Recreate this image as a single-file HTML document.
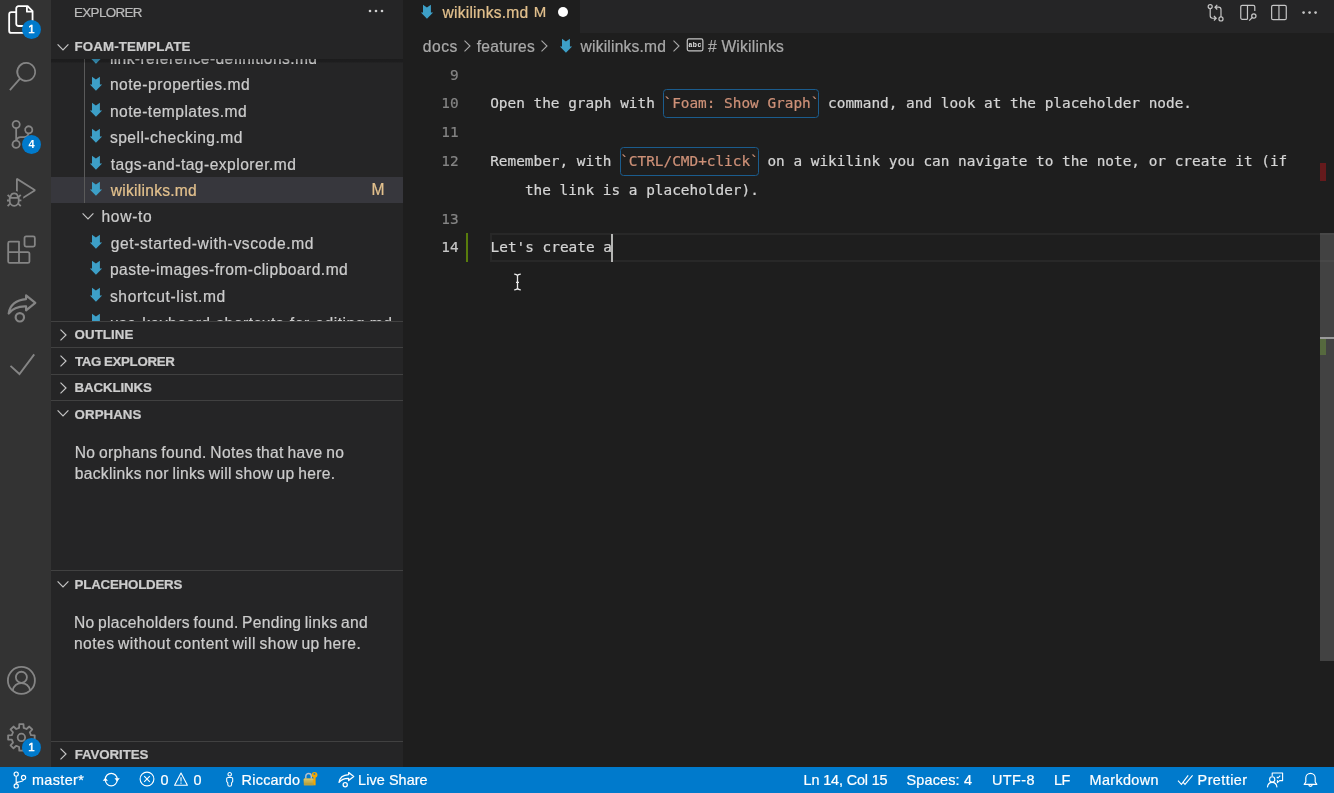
<!DOCTYPE html>
<html lang="en">
<head>
<meta charset="utf-8">
<title>wikilinks.md - foam-template</title>
<style>
*{box-sizing:border-box;margin:0;padding:0}
html,body{width:1334px;height:793px;overflow:hidden;background:#1e1e1e}
body{position:relative;font-family:"Liberation Sans",sans-serif;font-size:15.6px;color:#cccccc;-webkit-font-smoothing:antialiased}
.abs{position:absolute}
.ft{position:absolute;white-space:pre;-webkit-text-stroke:.22px}
svg{display:block;overflow:visible}
/* activity bar */
#act{will-change:transform;position:absolute;left:0;top:0;width:51px;height:767px;background:#333333}
#act svg{position:absolute}
.badge{position:absolute;width:19.2px;height:19.2px;border-radius:50%;background:#007acc;color:#fff;font-size:11px;font-weight:bold;text-align:center;line-height:19.2px}
.b1{font-weight:normal;-webkit-text-stroke:.55px #fff;font-size:11.5px}
/* sidebar */
#side{position:absolute;left:51px;top:0;width:352px;height:767px;background:#252526;overflow:hidden;will-change:transform}
#side .title{position:absolute;left:24px;top:0;height:25px;line-height:25px;font-size:13.2px;color:#bbbbbb;white-space:nowrap}
.phead{position:absolute;left:0;width:352px;height:26.4px;line-height:26.4px;font-size:13.3px;font-weight:bold;color:#cccccc;border-top:1px solid #414141;white-space:nowrap}
.phead span{position:absolute;left:23.6px;top:0}
.phead svg.cr{position:absolute;left:3.8px;top:4.9px}
.phead svg.cd{position:absolute;left:3.6px;top:4.3px}
#tree{position:absolute;left:0;top:59.4px;width:352px;height:261.6px;overflow:hidden}
.row{position:absolute;left:0;width:352px;height:26.4px;line-height:26.4px;white-space:nowrap;color:#cccccc}
.row .lbl{position:absolute;left:59.6px;top:1px;letter-spacing:.45px}
.row svg.md{position:absolute;left:38px;top:4.5px}
.row.sel{background:#37373d;color:#e2c08d}
.row .m{position:absolute;right:19px;top:0;color:#e2c08d;font-size:14px}
.msg{color:#cccccc;font-size:15.6px;line-height:21.4px;word-spacing:-1.1px}
/* editor */
#tabs{will-change:transform;position:absolute;left:403px;top:0;width:931px;height:33px;background:#252526}
#tab{position:absolute;left:0;top:0;width:177px;height:33px;background:#1e1e1e;color:#e2c08d;line-height:25px;white-space:nowrap}
#crumbs{will-change:transform;position:absolute;left:403px;top:33px;width:931px;height:26.4px;line-height:26.4px;color:#a9a9a9;white-space:nowrap}
#crumbs span{position:absolute;top:0}
#ed{will-change:transform;position:absolute;left:402.7px;top:60.1px;width:931.3px;height:707.6px;font-family:"DejaVu Sans Mono","Liberation Mono",monospace;font-size:14.4px;color:#d4d4d4;-webkit-text-stroke:.22px}
.ln{position:absolute;left:0;width:55.7px;text-align:right;height:28.8px;line-height:28.8px;color:#858585;white-space:pre}
.ln.cur{color:#c6c6c6}
.cl{position:absolute;left:87.2px;height:28.8px;line-height:28.8px;white-space:pre}
.code{color:#ce9178}
.box{position:absolute;height:28.8px;border:1px solid #1b5c8d;border-radius:3.5px}
/* status */
#status{will-change:transform;position:absolute;left:0;top:767px;width:1334px;height:26px;background:#007acc;color:#ffffff;font-size:14.4px;line-height:26px;white-space:nowrap}
#status span{position:absolute;top:0}
#status svg{position:absolute}
</style>
</head>
<body>

<div id="act">
  <svg style="left:7.3px;top:4.9px" width="28.8" height="28.8" viewBox="0 0 24 24" fill="#fff"><g fill="none" stroke="#ffffff" stroke-width="1.5" stroke-linejoin="round"><path d="M17.2 0.95 H9.6 a1.9 1.9 0 0 0 -1.9 1.9 V15.6 a1.9 1.9 0 0 0 1.9 1.9 H19.4 a1.9 1.9 0 0 0 1.9 -1.9 V5.1 Z"/><path d="M16.6 1.2 V5.6 H21"/><path d="M7.7 6.0 H3.7 a1.9 1.9 0 0 0 -1.9 1.9 V21.4 a1.9 1.9 0 0 0 1.9 1.9 H13.6 a1.9 1.9 0 0 0 1.9 -1.9 V17.6"/></g></svg>
  <div class="badge b1" style="left:21.9px;top:19.9px">1</div>
  <svg style="left:8px;top:61.6px" width="28.8" height="28.8" viewBox="0 0 24 24" fill="#858585"><path d="M15.25 0a8.25 8.25 0 0 0-6.18 13.72L1 22.88l1.12 1.12 8.05-9.12A8.251 8.251 0 1 0 15.25.01V0zm0 15a6.75 6.75 0 1 1 0-13.5 6.75 6.75 0 0 1 0 13.5z"/></svg>
  <svg style="left:7.6px;top:120.1px" width="28.8" height="28.8" viewBox="0 0 24 24" fill="#858585"><path d="M21.007 8.222A3.738 3.738 0 0 0 15.045 5.2a3.737 3.737 0 0 0 1.156 6.583 2.988 2.988 0 0 1-2.668 1.67h-2.99a4.456 4.456 0 0 0-2.989 1.165V7.4a3.737 3.737 0 1 0-1.494 0v9.117a3.776 3.776 0 1 0 1.816.099 2.99 2.99 0 0 1 2.668-1.667h2.99a4.484 4.484 0 0 0 4.223-3.039 3.736 3.736 0 0 0 3.25-3.687zM4.565 3.738a2.242 2.242 0 1 1 4.484 0 2.242 2.242 0 0 1-4.484 0zm4.484 16.441a2.242 2.242 0 1 1-4.484 0 2.242 2.242 0 0 1 4.484 0zm8.221-9.715a2.242 2.242 0 1 1 0-4.485 2.242 2.242 0 0 1 0 4.485z"/></svg>
  <div class="badge" style="left:22px;top:134.6px">4</div>
  <svg style="left:7.3px;top:177.7px" width="28.8" height="28.8" viewBox="0 0 24 24" fill="#858585"><path d="M10.94 13.5l-1.32 1.32a3.73 3.73 0 0 0-7.24 0L1.06 13.5 0 14.56l1.72 1.72-.22.22V18H0v1.5h1.5v.08c.077.489.214.966.41 1.42L0 22.94 1.06 24l1.65-1.65A4.308 4.308 0 0 0 6 24a4.31 4.31 0 0 0 3.29-1.65L10.94 24 12 22.94 10.09 21c.198-.464.336-.951.41-1.45v-.1H12V18h-1.5v-1.5l-.22-.22L12 14.56l-1.06-1.06zM6 13.5a2.25 2.25 0 0 1 2.25 2.25h-4.5A2.25 2.25 0 0 1 6 13.5zm3 6a3.33 3.33 0 0 1-3 3 3.33 3.33 0 0 1-3-3v-2.25h6v2.25zm14.76-9.9v1.26L13.5 17.37V15.6l8.5-5.37L9 2v9.46a5.07 5.07 0 0 0-1.5-.72V.63L8.64 0l15.12 9.6z"/></svg>
  <svg style="left:7.3px;top:235.3px" width="28.8" height="28.8" viewBox="0 0 24 24" fill="#858585"><g fill="none" stroke="#858585" stroke-width="1.5" stroke-linejoin="round"><rect x="14.6" y="1.1" width="8.6" height="8.6" rx="1.3"/><path d="M10 5.6 H2.3 a1.3 1.3 0 0 0 -1.3 1.3 V22 a1.3 1.3 0 0 0 1.3 1.3 H17.4 a1.3 1.3 0 0 0 1.3 -1.3 V15.6 a1.3 1.3 0 0 0 -1.3 -1.3 H10 Z M10 14.3 V23.3 M1 14.3 H10"/></g></svg>
  <svg style="left:7.3px;top:292.9px" width="28.8" height="28.8" viewBox="0 0 24 24" fill="#858585"><g fill="none" stroke="#858585" stroke-width="1.8" stroke-linejoin="round"><path d="M1.4 17.1 C2.3 10.2 7.6 5.6 15.9 5.1 V2.0 L23.6 8.2 L15.9 14.5 V11.2 C10 11.0 5.1 12.3 1.4 17.1 Z"/><circle cx="10.7" cy="20.25" r="3.5"/></g></svg>
  <svg style="left:7.3px;top:350.5px" width="28.8" height="28.8" viewBox="0 0 24 24" fill="#858585"><path fill="none" stroke="#858585" stroke-width="1.55" d="M2.9 12.4 L10.4 19.2 L22.7 2.8"/></svg>
  <svg style="left:7.3px;top:666.2px" width="28.8" height="28.8" viewBox="0 0 24 24" fill="#858585"><g fill="none" stroke="#858585" stroke-width="1.5"><circle cx="12" cy="12" r="11.25"/><circle cx="12" cy="9.4" r="4.6"/><path d="M4.7 20.4 C5.6 16.6 8.4 14.3 12 14.3 C15.6 14.3 18.4 16.6 19.3 20.4"/></g></svg>
  <svg style="left:7.3px;top:723.4px" width="28.8" height="28.8" viewBox="0 0 24 24" fill="#858585"><g fill="none" stroke="#858585" stroke-width="1.5" stroke-linejoin="round"><path d="M23.06 10.25 L23.06 13.75 L19.97 13.91 L18.99 16.28 L21.06 18.58 L18.58 21.06 L16.28 18.99 L13.91 19.97 L13.75 23.06 L10.25 23.06 L10.09 19.97 L7.72 18.99 L5.42 21.06 L2.94 18.58 L5.01 16.28 L4.03 13.91 L0.94 13.75 L0.94 10.25 L4.03 10.09 L5.01 7.72 L2.94 5.42 L5.42 2.94 L7.72 5.01 L10.09 4.03 L10.25 0.94 L13.75 0.94 L13.91 4.03 L16.28 5.01 L18.58 2.94 L21.06 5.42 L18.99 7.72 L19.97 10.09 Z"/><circle cx="12" cy="12" r="3.1"/></g></svg>
  <div class="badge b1" style="left:21.9px;top:737.5px">1</div>
</div>

<div id="side">
  <span id="t_explorer" class="ft" style="left:23.10px;top:-0.5px;letter-spacing:-0.666px;font-size:13.4px;color:#bbbbbb;line-height:25px">EXPLORER</span>
  <svg class="abs" style="left:316.8px;top:3.4px" width="16" height="16" viewBox="0 0 16 16"><circle cx="2" cy="8" r="1.3" fill="#cfcfcf"/><circle cx="8" cy="8" r="1.3" fill="#cfcfcf"/><circle cx="14" cy="8" r="1.3" fill="#cfcfcf"/></svg>
  <div class="phead" style="top:33px;border-top:none"><svg class="cd" style="top:6.1px" width="16" height="16" viewBox="0 0 16 16"><path fill="none" stroke="#c5c5c5" stroke-width="1.2" d="M2.6 5.4 L8 10.9 L13.4 5.4"/></svg><span id="t_foam" class="ft" style="left:23.60px;top:0.9px;letter-spacing:0.120px">FOAM-TEMPLATE</span></div>
  <div id="tree">
    <div class="row" style="top:-14.6px"><svg class="md" width="14" height="15" viewBox="0 0 14 15"><path fill="#3d9fc7" d="M3 0.8 L6.9 3.5 L10.9 0.8 L10.9 8.5 L13.1 8.5 L6.95 14.7 L0.9 8.5 L3 8.5 Z"/></svg><span id="t_r0" class="ft" style="left:58.88px;top:1px;letter-spacing:0.40px">link-reference-definitions.md</span></div>
    <div class="row" style="top:11.8px"><svg class="md" width="14" height="15" viewBox="0 0 14 15"><path fill="#3d9fc7" d="M3 0.8 L6.9 3.5 L10.9 0.8 L10.9 8.5 L13.1 8.5 L6.95 14.7 L0.9 8.5 L3 8.5 Z"/></svg><span id="t_r1" class="ft" style="left:58.88px;top:1px;letter-spacing:0.523px">note-properties.md</span></div>
    <div class="row" style="top:38.2px"><svg class="md" width="14" height="15" viewBox="0 0 14 15"><path fill="#3d9fc7" d="M3 0.8 L6.9 3.5 L10.9 0.8 L10.9 8.5 L13.1 8.5 L6.95 14.7 L0.9 8.5 L3 8.5 Z"/></svg><span id="t_r2" class="ft" style="left:58.88px;top:1px;letter-spacing:0.482px">note-templates.md</span></div>
    <div class="row" style="top:64.6px"><svg class="md" width="14" height="15" viewBox="0 0 14 15"><path fill="#3d9fc7" d="M3 0.8 L6.9 3.5 L10.9 0.8 L10.9 8.5 L13.1 8.5 L6.95 14.7 L0.9 8.5 L3 8.5 Z"/></svg><span id="t_r3" class="ft" style="left:58.88px;top:1px;letter-spacing:0.483px">spell-checking.md</span></div>
    <div class="row" style="top:91.0px"><svg class="md" width="14" height="15" viewBox="0 0 14 15"><path fill="#3d9fc7" d="M3 0.8 L6.9 3.5 L10.9 0.8 L10.9 8.5 L13.1 8.5 L6.95 14.7 L0.9 8.5 L3 8.5 Z"/></svg><span id="t_r4" class="ft" style="left:59.78px;top:1.8px;letter-spacing:0.474px">tags-and-tag-explorer.md</span></div>
    <div class="row sel" style="top:117.4px"><svg class="md" width="14" height="15" viewBox="0 0 14 15"><path fill="#3d9fc7" d="M3 0.8 L6.9 3.5 L10.9 0.8 L10.9 8.5 L13.1 8.5 L6.95 14.7 L0.9 8.5 L3 8.5 Z"/></svg><span id="t_r5" class="ft" style="left:59.78px;top:1px;letter-spacing:0.254px">wikilinks.md</span><span id="t_m" class="ft" style="left:320.48px;top:0.6px;letter-spacing:0.000px;font-size:15.6px;color:#e2c08d">M</span></div>
    <div class="row" style="top:143.8px"><span class="abs" style="left:29px;top:5.2px"><svg class="cd" width="16" height="16" viewBox="0 0 16 16"><path fill="none" stroke="#c5c5c5" stroke-width="1.2" d="M2.6 5.4 L8 10.9 L13.4 5.4"/></svg></span><span id="t_r6" class="ft" style="left:50.5px;top:1px;letter-spacing:0.68px">how-to</span></div>
    <div class="row" style="top:170.2px"><svg class="md" width="14" height="15" viewBox="0 0 14 15"><path fill="#3d9fc7" d="M3 0.8 L6.9 3.5 L10.9 0.8 L10.9 8.5 L13.1 8.5 L6.95 14.7 L0.9 8.5 L3 8.5 Z"/></svg><span id="t_r7" class="ft" style="left:59.78px;top:1px;letter-spacing:0.586px">get-started-with-vscode.md</span></div>
    <div class="row" style="top:196.6px"><svg class="md" width="14" height="15" viewBox="0 0 14 15"><path fill="#3d9fc7" d="M3 0.8 L6.9 3.5 L10.9 0.8 L10.9 8.5 L13.1 8.5 L6.95 14.7 L0.9 8.5 L3 8.5 Z"/></svg><span id="t_r8" class="ft" style="left:58.88px;top:1px;letter-spacing:0.464px">paste-images-from-clipboard.md</span></div>
    <div class="row" style="top:223.0px"><svg class="md" width="14" height="15" viewBox="0 0 14 15"><path fill="#3d9fc7" d="M3 0.8 L6.9 3.5 L10.9 0.8 L10.9 8.5 L13.1 8.5 L6.95 14.7 L0.9 8.5 L3 8.5 Z"/></svg><span id="t_r9" class="ft" style="left:58.88px;top:1.8px;letter-spacing:0.642px">shortcut-list.md</span></div>
    <div class="row" style="top:249.4px"><svg class="md" width="14" height="15" viewBox="0 0 14 15"><path fill="#3d9fc7" d="M3 0.8 L6.9 3.5 L10.9 0.8 L10.9 8.5 L13.1 8.5 L6.95 14.7 L0.9 8.5 L3 8.5 Z"/></svg><span id="t_r10" class="ft" style="left:58.88px;top:1.8px;letter-spacing:0.515px">use-keyboard-shortcuts-for-editing.md</span></div>
    <div class="abs" style="left:33px;top:0;width:1px;height:143.8px;background:#5a5a5a"></div>
    <div class="abs" style="left:0;top:-0.4px;width:352px;height:4.4px;background:linear-gradient(rgba(0,0,0,.24) 0,rgba(0,0,0,.2) 75%,rgba(0,0,0,0) 100%)"></div>
  </div>
  <div class="phead" style="top:321px"><svg class="cr" width="16" height="16" viewBox="0 0 16 16"><path fill="none" stroke="#c5c5c5" stroke-width="1.2" d="M5.5 2.6 L11 8 L5.5 13.4"/></svg><span id="t_outline" class="ft" style="left:23.60px;top:0.1px;letter-spacing:0.050px">OUTLINE</span></div>
  <div class="phead" style="top:347.4px"><svg class="cr" width="16" height="16" viewBox="0 0 16 16"><path fill="none" stroke="#c5c5c5" stroke-width="1.2" d="M5.5 2.6 L11 8 L5.5 13.4"/></svg><span id="t_tag" class="ft" style="left:23.96px;top:0.8px;letter-spacing:-0.306px;word-spacing:-0.6px">TAG EXPLORER</span></div>
  <div class="phead" style="top:373.8px"><svg class="cr" width="16" height="16" viewBox="0 0 16 16"><path fill="none" stroke="#c5c5c5" stroke-width="1.2" d="M5.5 2.6 L11 8 L5.5 13.4"/></svg><span id="t_back" class="ft" style="left:23.60px;top:0.1px;letter-spacing:-0.136px">BACKLINKS</span></div>
  <div class="phead" style="top:400.2px"><svg class="cd" width="16" height="16" viewBox="0 0 16 16"><path fill="none" stroke="#c5c5c5" stroke-width="1.2" d="M2.6 5.4 L8 10.9 L13.4 5.4"/></svg><span id="t_orph" class="ft" style="left:23.60px;top:1.0px;letter-spacing:0.050px">ORPHANS</span></div>
  <span id="t_m1a" class="ft msg" style="left:23.69px;top:442.1px;letter-spacing:0.350px">No orphans found. Notes that have no</span>
  <span id="t_m1b" class="ft msg" style="left:23.69px;top:463.1px;letter-spacing:0.327px">backlinks nor links will show up here.</span>
  <div class="phead" style="top:570px"><svg class="cd" style="top:5.1px" width="16" height="16" viewBox="0 0 16 16"><path fill="none" stroke="#c5c5c5" stroke-width="1.2" d="M2.6 5.4 L8 10.9 L13.4 5.4"/></svg><span id="t_place" class="ft" style="left:23.60px;top:1.2px;letter-spacing:-0.208px">PLACEHOLDERS</span></div>
  <span id="t_m2a" class="ft msg" style="left:22.97px;top:612.2px;letter-spacing:0.291px">No placeholders found. Pending links and</span>
  <span id="t_m2b" class="ft msg" style="left:22.97px;top:633.1px;letter-spacing:0.455px">notes without content will show up here.</span>
  <div class="phead" style="top:740.6px"><svg class="cr" width="16" height="16" viewBox="0 0 16 16"><path fill="none" stroke="#c5c5c5" stroke-width="1.2" d="M5.5 2.6 L11 8 L5.5 13.4"/></svg><span id="t_fav" class="ft" style="left:23.69px;top:0.3px;letter-spacing:-0.082px">FAVORITES</span></div>
</div>

<div id="tabs">
  <div id="tab"><svg class="abs" style="left:17.3px;top:3.8px" width="14" height="15" viewBox="0 0 14 15"><path fill="#3d9fc7" d="M3 0.8 L6.9 3.5 L10.9 0.8 L10.9 8.5 L13.1 8.5 L6.95 14.7 L0.9 8.5 L3 8.5 Z"/></svg><span id="t_tab" class="ft" style="left:39.48px;top:0px;letter-spacing:0.232px">wikilinks.md</span><span id="t_tabm" class="ft" style="left:130.66px;top:-0.6px;letter-spacing:0.000px;font-size:15px">M</span><span class="abs" style="left:155px;top:7.4px;width:10px;height:10px;border-radius:50%;background:#ffffff"></span></div>
  <svg class="abs" style="left:803px;top:2.5px" width="19.2" height="19.2" viewBox="0 0 16 16" fill="none" stroke="#c5c5c5" stroke-width="1"><circle cx="3.5" cy="3" r="1.7"/><circle cx="12.5" cy="13.3" r="1.7"/><path d="M3.5 4.7 V10.7 a2 2 0 0 0 2 2 H8.3 M6.6 10.8 L8.5 12.7 L6.6 14.6 M12.5 11.6 V5.5 a2 2 0 0 0 -2 -2 H7.7 M9.4 1.6 L7.5 3.5 L9.4 5.4"/></svg>
  <svg class="abs" style="left:835px;top:2.5px" width="19.2" height="19.2" viewBox="0 0 16 16" fill="none" stroke="#c5c5c5" stroke-width="1"><path d="M14 6.7 V3.1 a1.2 1.2 0 0 0 -1.2 -1.2 H3.5 a1.2 1.2 0 0 0 -1.2 1.2 V12.4 a1.2 1.2 0 0 0 1.2 1.2 H7.9 M7.9 1.9 V13.6"/><circle cx="13.2" cy="10.8" r="1.8"/><path d="M12.2 11.9 L9.3 14.7"/></svg>
  <svg class="abs" style="left:866px;top:2.5px" width="19.2" height="19.2" viewBox="0 0 16 16" fill="none" stroke="#c5c5c5" stroke-width="1"><rect x="2.2" y="1.9" width="12.2" height="11.95" rx="1.2"/><path d="M8.3 1.9 V13.85"/></svg>
  <svg class="abs" style="left:896.6px;top:2.5px" width="19.2" height="19.2" viewBox="0 0 16 16" fill="#c5c5c5"><circle cx="3" cy="8" r="1.1"/><circle cx="8" cy="8" r="1.1"/><circle cx="13" cy="8" r="1.1"/></svg>
</div>
<div id="crumbs"><span id="t_c1" class="ft" style="left:19.78px;top:0.8px;letter-spacing:0.540px">docs</span><svg class="abs" style="left:55.5px;top:4.9px" width="16" height="16" viewBox="0 0 16 16"><path fill="none" stroke="#a9a9a9" stroke-width="1.1" d="M5.5 2.6 L11 8 L5.5 13.4"/></svg><span id="t_c2" class="ft" style="left:73.78px;top:0.8px;letter-spacing:0.247px">features</span><svg class="abs" style="left:133.3px;top:4.9px" width="16" height="16" viewBox="0 0 16 16"><path fill="none" stroke="#a9a9a9" stroke-width="1.1" d="M5.5 2.6 L11 8 L5.5 13.4"/></svg><svg class="abs" style="left:156px;top:4.7px" width="14" height="15" viewBox="0 0 14 15"><path fill="#3d9fc7" d="M3 0.8 L6.9 3.5 L10.9 0.8 L10.9 8.5 L13.1 8.5 L6.95 14.7 L0.9 8.5 L3 8.5 Z"/></svg><span id="t_c3" class="ft" style="left:177.58px;top:0.8px;letter-spacing:0.202px">wikilinks.md</span><svg class="abs" style="left:264.5px;top:4.9px" width="16" height="16" viewBox="0 0 16 16"><path fill="none" stroke="#a9a9a9" stroke-width="1.1" d="M5.5 2.6 L11 8 L5.5 13.4"/></svg><svg class="abs" style="left:281.7px;top:2.6px" width="19.2" height="19.2" viewBox="0 0 16 16"><rect x="1.9" y="2.4" width="13" height="10" rx="1.3" fill="none" stroke="#c5c5c5" stroke-width="1"/><text x="8.4" y="9.3" text-anchor="middle" font-family="Liberation Sans, sans-serif" font-size="5.6" font-weight="bold" fill="#e8e8e8" letter-spacing="0.5">abc</text></svg><span id="t_c4" class="ft" style="left:305.00px;top:0.8px;letter-spacing:0.210px"># Wikilinks</span></div>
<div id="ed">
  <div class="ln" style="top:1.3px">9</div>
  <div class="ln" style="top:28.8px">10</div>
  <div class="ln" style="top:57.6px">11</div>
  <div class="ln" style="top:87px">12</div>
  <div class="ln" style="top:144.8px">13</div>
  <div class="ln cur" style="top:172.8px">14</div>
  <div class="abs" style="left:87.3px;top:172.8px;width:870px;height:28.8px;border:2px solid #282828"></div>
  <div class="abs" style="left:62.5px;top:172.8px;width:2.9px;height:28.8px;background:#587c0c"></div>
  <div class="box" style="left:260.0px;top:29.4px;width:156.1px"></div>
  <div class="box" style="left:216.6px;top:86.8px;width:139.9px"></div>
  <div class="cl" style="top:28.8px">Open the graph with <span class="code">`Foam: Show Graph`</span> command, and look at the placeholder node.</div>
  <div class="cl" style="top:87.1px">Remember, with <span class="code">`CTRL/CMD+click`</span> on a wikilink you can navigate to the note, or create it (if</div>
  <div class="cl" style="top:115.9px;left:121.9px">the link is a placeholder).</div>
  <div class="cl" style="top:172.8px;left:87.6px">Let's create a</div>
  <div class="abs" style="left:208.3px;top:173.6px;width:2px;height:28px;background:#b4b5b3"></div>
  <svg class="abs" style="left:110.3px;top:213.4px" width="9" height="18" viewBox="0 0 9 18" fill="none" stroke="#e8e8e8" stroke-width="1.3"><path d="M1.2 1.2 C3 1.2 4.5 1.8 4.5 3.2 C4.5 1.8 6 1.2 7.8 1.2 M4.5 3 V15 M1.2 16.8 C3 16.8 4.5 16.2 4.5 14.8 C4.5 16.2 6 16.8 7.8 16.8 M3 9.3 H6"/></svg>
  <div class="abs" style="left:917.3px;top:172.9px;width:14.2px;height:428px;background:rgba(121,121,121,.4)"></div>
  <div class="abs" style="left:917.2px;top:103.1px;width:5.6px;height:17.8px;background:#651a1c"></div>
  <div class="abs" style="left:917.3px;top:276.9px;width:14.2px;height:2px;background:#9a9a9a"></div>
  <div class="abs" style="left:917.2px;top:278.9px;width:5.6px;height:16px;background:#56693e"></div>
</div>

<div id="status">
  <svg style="left:11.5px;top:3.5px" width="16" height="19" viewBox="0 0 16 19" fill="none" stroke="#fff" stroke-width="1.15"><circle cx="4.2" cy="3.1" r="2.1"/><circle cx="4.2" cy="14.9" r="2.1"/><circle cx="11.55" cy="6.4" r="2.1"/><path d="M4.2 5.2 V12.8 M11.55 8.5 C11.4 10.6 8.6 10.7 6 11.1 C4.8 11.3 4.2 11.9 4.2 12.8"/></svg>
  <span id="s_master" class="ft" style="left:32.02px;top:0px;letter-spacing:0.360px">master*</span>
  <svg style="left:102px;top:3px" width="19" height="19" viewBox="0 0 19 19" fill="none" stroke="#fff" stroke-width="1.15"><path d="M3.35 9.2 A5.9 5.9 0 0 1 15.15 9.2 M15.15 9.9 A5.9 5.9 0 0 1 3.35 9.9"/><path fill="#fff" stroke="none" d="M12.5 8.3 H17.8 L15.15 11.4 Z M0.7 10.8 H6 L3.35 7.7 Z"/></svg>
  <svg style="left:138.9px;top:4.3px" width="16" height="16" viewBox="0 0 16 16" fill="none" stroke="#fff" stroke-width="1.1"><circle cx="8" cy="8" r="6.9"/><path d="M5.2 5.2 L10.8 10.8 M10.8 5.2 L5.2 10.8"/></svg>
  <span id="s_z1" class="ft" style="left:160.39px;top:0px;letter-spacing:0.000px">0</span>
  <svg style="left:172.9px;top:4.8px" width="16" height="15" viewBox="0 0 16 15" fill="none" stroke="#fff" stroke-width="1.1" stroke-linejoin="round"><path d="M8 1 L14.4 13.3 H1.6 Z"/><path d="M8 5.2 V9.4 M8 10.6 V11.8"/></svg>
  <span id="s_z2" class="ft" style="left:193.44px;top:0px;letter-spacing:0.000px">0</span>
  <svg style="left:225px;top:5px" width="10" height="16" viewBox="0 0 10 16" fill="none" stroke="#fff" stroke-width="1.05"><circle cx="4.7" cy="2.3" r="1.75"/><path d="M3.1 5.4 H6.3 a1.4 1.4 0 0 1 1.4 1.4 V9.2 C7.7 10 6.7 10.2 6.6 11 V12.4 a1.9 1.9 0 0 1 -3.8 0 V11 C2.7 10.2 1.7 10 1.7 9.2 V6.8 a1.4 1.4 0 0 1 1.4 -1.4 Z"/></svg>
  <span id="s_ric" class="ft" style="left:241.60px;top:0px;letter-spacing:0.249px">Riccardo</span>
  <svg style="left:302.9px;top:5.1px" width="16" height="15" viewBox="0 0 16 15"><path fill="none" stroke="#b9c2cb" stroke-width="1.4" d="M2.8 7.2 V4.2 a2.75 2.75 0 0 1 5.5 0 V7.2"/><rect x="0.8" y="6.6" width="10" height="6.8" rx="0.6" fill="#b9a23f"/><rect x="0.8" y="6.6" width="10" height="2.4" rx="0.6" fill="#d6c367"/><rect x="0.8" y="8.4" width="10" height="2.2" fill="#c7b252"/><circle cx="11.55" cy="2.8" r="2.9" fill="#f5a800"/><circle cx="11.4" cy="1.9" r="0.95" fill="#0a7bd0"/><rect x="10.5" y="4.6" width="2.1" height="8.7" fill="#f5a800"/><rect x="9.6" y="8.4" width="1.2" height="1.1" fill="#f5a800"/><rect x="9.6" y="10.4" width="1.2" height="1.1" fill="#f5a800"/></svg>
  <svg style="left:338.2px;top:3.9px" width="16.2" height="16.2" viewBox="0 0 24 24" fill="none" stroke="#fff" stroke-width="1.9" stroke-linejoin="round"><path d="M1.5 16.9 C2.4 10.2 7.6 5.8 15.8 5.3 V2.3 L23.3 8.2 L15.8 14.1 V10.9 C10 10.8 5.1 12.1 1.5 16.9 Z"/><circle cx="10.7" cy="20.3" r="3.1"/></svg>
  <span id="s_live" class="ft" style="left:358.08px;top:0px;letter-spacing:0.080px">Live Share</span>
  <span id="s_ln" class="ft" style="left:803.58px;top:0px;letter-spacing:-0.133px">Ln 14, Col 15</span>
  <span id="s_sp" class="ft" style="left:906.60px;top:0px;letter-spacing:0.165px">Spaces: 4</span>
  <span id="s_utf" class="ft" style="left:992.06px;top:0px;letter-spacing:0.433px">UTF-8</span>
  <span id="s_lf" class="ft" style="left:1054.08px;top:0px;letter-spacing:-0.600px">LF</span>
  <span id="s_md" class="ft" style="left:1089.58px;top:0px;letter-spacing:0.352px">Markdown</span>
  <svg style="left:1177px;top:5px" width="17" height="16" viewBox="0 0 17 16" fill="none" stroke="#fff" stroke-width="1.1"><path d="M1 8.6 L4.4 12.4 L11.2 3.4 M6.4 10.6 L8 12.4 L15.6 3.4"/></svg>
  <span id="s_pr" class="ft" style="left:1197.62px;top:0px;letter-spacing:0.429px">Prettier</span>
  <svg style="left:1266px;top:4px" width="18" height="18" viewBox="0 0 18 18" fill="none" stroke="#fff" stroke-width="1.1" stroke-linejoin="round"><path d="M6.2 5 V2 H16.6 V9.6 H13.6 L11.4 11.6 V9.6 H11"/><circle cx="6.2" cy="8.4" r="2.6"/><path d="M1.4 16.4 C1.8 13 3.6 11.4 6.2 11.4 C8.8 11.4 10.6 13 11 16.4"/><path d="M10.8 5.8 L12 7 L14.2 4.6"/></svg>
  <svg style="left:1302px;top:4px" width="17" height="18" viewBox="0 0 17 18" fill="none" stroke="#fff" stroke-width="1.15" stroke-linejoin="round"><path d="M2.2 13.4 H14.8 L13.2 11 V7 a4.7 4.7 0 0 0 -9.4 0 V11 Z"/><path d="M6.8 13.6 a1.7 1.7 0 0 0 3.4 0"/></svg>
</div>

</body>
</html>
